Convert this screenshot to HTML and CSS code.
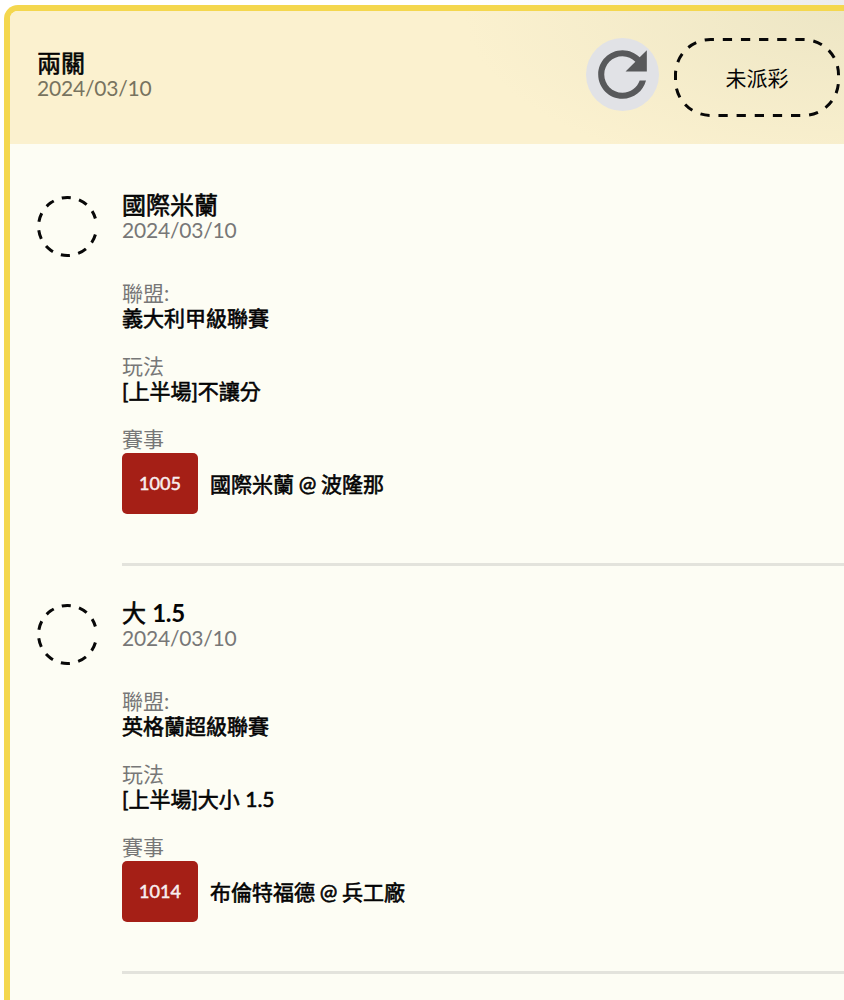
FILE: index.html
```html
<!DOCTYPE html>
<html lang="zh-Hant">
<head>
  <meta charset="UTF-8">
  <title>兩關</title>
  <link rel="stylesheet" href="styles.css">
</head>
<body>
  <div class="ticket">
    <div class="ticket-header">
      <div class="heading">
        <div class="title">兩關</div>
        <div class="date">2024/03/10</div>
      </div>
      <div class="actions">
        <button class="refresh">
          <svg viewBox="0 0 24 24"><path d="M17.65 6.35C16.2 4.9 14.21 4 12 4c-4.42 0-7.99 3.58-7.99 8s3.57 8 7.99 8c3.73 0 6.84-2.55 7.73-6h-2.08c-.82 2.33-3.04 4-5.65 4-3.31 0-6-2.69-6-6s2.69-6 6-6c1.66 0 3.14.69 4.22 1.78L13 11h7V4l-2.35 2.35z"/></svg>
        </button>
        <div class="status">
          <svg viewBox="0 0 166 79"><path d="M48.8 1.6H129.5A35 35 0 0 1 164.5 36.6V42.4A35 35 0 0 1 129.5 77.4H36.5A35 35 0 0 1 1.5 42.4V36.6A35 35 0 0 1 36.5 1.6Z" pathLength="414" stroke-dasharray="9.2 8.8"/></svg>
          <span>未派彩</span>
        </div>
      </div>
    </div>

    <div class="bets">
      <div class="bet">
        <svg class="mark" viewBox="0 0 61 61"><path d="M58.4 38.5A29 29 0 1 1 58.4 22.5" stroke-dasharray="9 8.5"/></svg>
        <div class="detail">
          <div class="title">國際米蘭</div>
          <div class="date">2024/03/10</div>
          <dl>
            <dt>聯盟:</dt>
            <dd>義大利甲級聯賽</dd>
            <dt>玩法</dt>
            <dd>[上半場]不讓分</dd>
            <dt>賽事</dt>
            <dd class="match"><span class="code">1005</span>國際米蘭 @ 波隆那</dd>
          </dl>
        </div>
      </div>

      <div class="bet">
        <svg class="mark" viewBox="0 0 61 61"><path d="M58.4 38.5A29 29 0 1 1 58.4 22.5" stroke-dasharray="9 8.5"/></svg>
        <div class="detail">
          <div class="title">大 <b>1.5</b></div>
          <div class="date">2024/03/10</div>
          <dl>
            <dt>聯盟:</dt>
            <dd>英格蘭超級聯賽</dd>
            <dt>玩法</dt>
            <dd>[上半場]大小 1.5</dd>
            <dt>賽事</dt>
            <dd class="match"><span class="code">1014</span>布倫特福德 @ 兵工廠</dd>
          </dl>
        </div>
      </div>
    </div>
  </div>
</body>
</html>
```
FILE: styles.css
```css
* { box-sizing: border-box; }
body {
  margin: 0;
  height: 1000px;
  padding: 5px 0 0 4px;
  overflow: hidden;
  background: radial-gradient(ellipse 380px 180px at 844px 0, #ececec, #fff);
  font-family: Lato, "Noto Sans CJK TC", sans-serif;
  font-size: 21px;
  line-height: 25px;
  color: #040404;
}
.ticket {
  height: 1010px;
  border: 6.5px solid #f4d74e;
  border-right: 0;
  border-radius: 14px 0 0 0;
  background: #fdfdf4;
  overflow: hidden;
}
.ticket-header {
  display: flex;
  justify-content: space-between;
  height: 133px;
  padding: 27px 4px 0 27px;
  background: radial-gradient(ellipse 380px 170px at 100% 0, #ede6c5, #fbf1cf);
}
.heading { padding-top: 12px; }
.title, dd { -webkit-text-stroke: 0.6px; }
.title { font-size: 24px; }
.title b { -webkit-text-stroke: 0; letter-spacing: -0.3px; }
.date { color: #777; letter-spacing: -0.2px; }
.ticket-header .date { color: #77735f; }
.actions { display: flex; gap: 15px; }
.refresh {
  width: 73px;
  height: 73px;
  padding: 0;
  border: 0;
  border-radius: 50%;
  background: #e1e2e6;
}
.refresh svg { display: block; fill: #58595b; }
.status {
  display: grid;
  place-items: center;
  width: 166px;
  height: 79px;
}
.status svg, .status span { grid-area: 1 / 1; }
.status svg, .mark { fill: none; stroke: #080808; stroke-width: 3; }
.status svg { width: 166px; height: 79px; }
.bets { padding-left: 27px; }
.bet { display: flex; gap: 24px; height: 408px; padding-top: 48px; }
.mark { width: 61px; height: 61px; margin-top: 4px; }
.detail { flex: 1; height: 374px; border-bottom: 3px solid #e3e3dc; }
dl { margin: 39px 0 0; }
dt { color: #777; line-height: 24px; }
dd { margin: 0 0 24px; line-height: 25px; }
.match {
  display: flex;
  align-items: center;
  gap: 12px;
  margin-top: 2px;
  word-spacing: -0.6px;
}
.code {
  width: 76px;
  border-radius: 5px;
  background: #a51f16;
  color: #f8eeee;
  font-size: 18px;
  line-height: 61px;
  text-align: center;
  -webkit-text-stroke: 0.5px;
}
```
